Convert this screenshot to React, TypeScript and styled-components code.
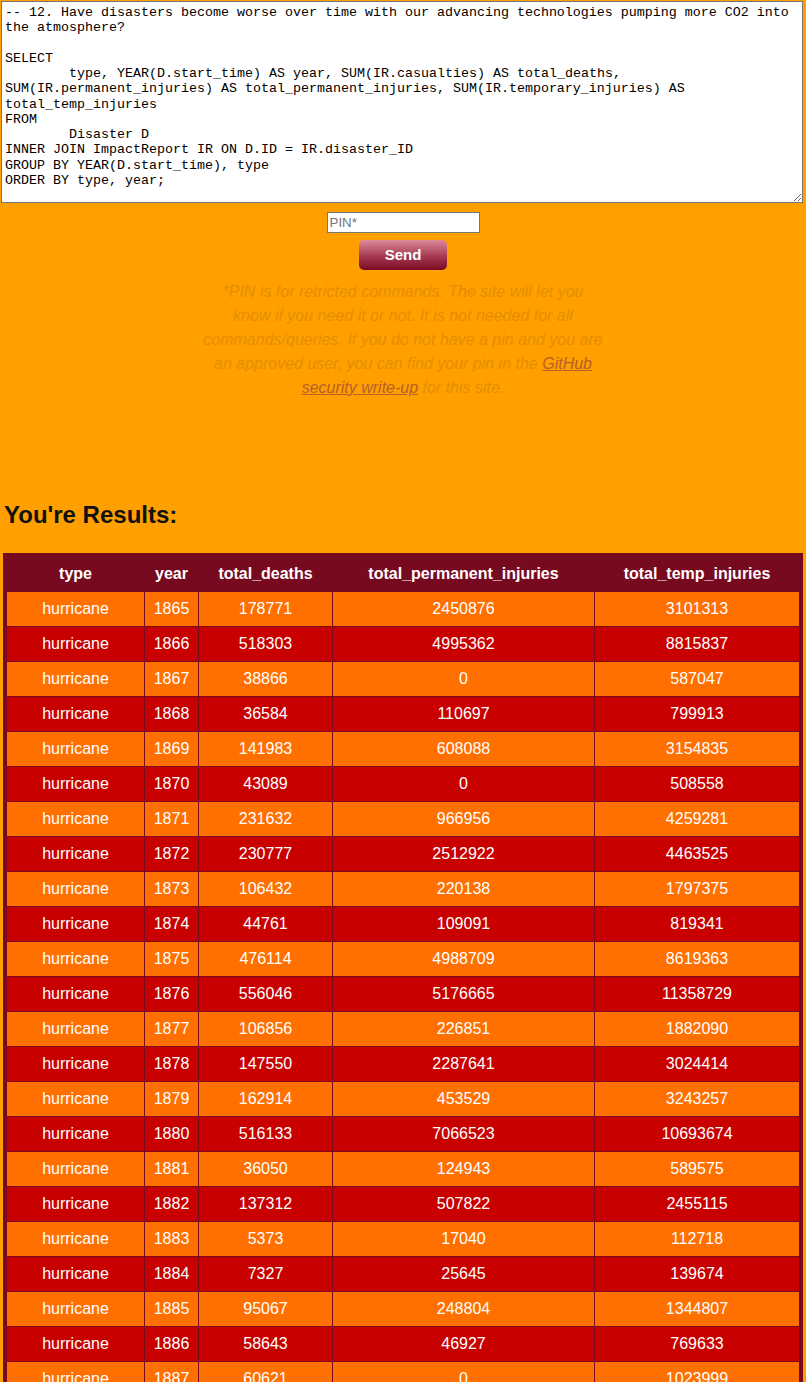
import React from 'react';
import styled, { createGlobalStyle } from 'styled-components';

const GlobalStyle = createGlobalStyle`
   html, body {
      margin: 0;
      padding: 0;
      overflow: hidden;
      background-color: #ff9f00;
      font-family: 'Liberation Sans', Arial, sans-serif;
   }
`;

const Page = styled.div`
   padding: 1px 1px 0 1px;
   display: flex;
   flex-direction: column;
`;

const QueryBox = styled.textarea`
   display: block;
   width: 802px;
   height: 202px;
   margin: 0;
   padding: 3px 3px 2px 3px;
   box-sizing: border-box;
   border: 1px solid #767676;
   background: #fff;
   color: #000;
   font-family: 'Liberation Mono', 'Courier New', monospace;
   font-size: 13.333px;
   line-height: 15.25px;
   tab-size: 8;
   resize: vertical;
`;

const Form = styled.div`
   display: flex;
   flex-direction: column;
   align-items: center;
`;

const PinInput = styled.input`
   margin-top: 9px;
   width: 153px;
   height: 21px;
   box-sizing: border-box;
   padding: 1px 2px;
   border: 1px solid #767676;
   font-family: 'Liberation Sans', Arial, sans-serif;
   font-size: 13.333px;
   &::placeholder {
      color: #757575;
   }
`;

const SendButton = styled.button`
   margin-top: 7px;
   width: 88px;
   height: 30px;
   padding: 0 0 2px 0;
   border: none;
   border-radius: 5px;
   background: linear-gradient(to bottom, #dc8a99 0%, #a43a52 55%, #7a0a22 100%);
   color: #fff;
   font-family: 'Liberation Sans', Arial, sans-serif;
   font-size: 15px;
   font-weight: bold;
   cursor: pointer;
`;

const Note = styled.p`
   width: 400px;
   margin: 10px 0 0 0;
   text-align: center;
   font-style: italic;
   font-size: 16px;
   line-height: 24px;
   color: #e58e00;

   a {
      color: #b8602a;
      text-decoration: underline;
   }
`;

const Heading = styled.h2`
   margin: 101px 0 0 3px;
   font-size: 24px;
   line-height: 28px;
   font-weight: bold;
   color: #111;
`;

const TableWrap = styled.div`
   margin: 24px 2px 0 2px;
`;

const Table = styled.table`
   width: 800px;
   table-layout: fixed;
   border-collapse: separate;
   border-spacing: 1px;
   border: 3px solid #780a20;
   background-color: #780a20;
   color: #fff;
   font-size: 16px;
`;

const HeadCell = styled.th<{ $w: number }>`
   width: ${({ $w }) => $w}px;
   box-sizing: border-box;
   height: 34px;
   padding: 0 4px;
   font-weight: bold;
   text-align: center;
`;

const Row = styled.tr<{ $odd: boolean }>`
   background-color: ${({ $odd }) => ($odd ? '#ff7000' : '#c80000')};
`;

const Cell = styled.td`
   height: 34px;
   padding: 0 4px;
   box-sizing: border-box;
   text-align: center;
`;

const query = `-- 12. Have disasters become worse over time with our advancing technologies pumping more CO2 into the atmosphere?

SELECT
\ttype, YEAR(D.start_time) AS year, SUM(IR.casualties) AS total_deaths, SUM(IR.permanent_injuries) AS total_permanent_injuries, SUM(IR.temporary_injuries) AS total_temp_injuries
FROM
\tDisaster D
INNER JOIN ImpactReport IR ON D.ID = IR.disaster_ID
GROUP BY YEAR(D.start_time), type
ORDER BY type, year;`;

const columns: [string, number][] = [
   ['type', 137],
   ['year', 53],
   ['total_deaths', 133],
   ['total_permanent_injuries', 261],
   ['total_temp_injuries', 204],
];

const rows: [number, number, number, number][] = [
   [1865, 178771, 2450876, 3101313],
   [1866, 518303, 4995362, 8815837],
   [1867, 38866, 0, 587047],
   [1868, 36584, 110697, 799913],
   [1869, 141983, 608088, 3154835],
   [1870, 43089, 0, 508558],
   [1871, 231632, 966956, 4259281],
   [1872, 230777, 2512922, 4463525],
   [1873, 106432, 220138, 1797375],
   [1874, 44761, 109091, 819341],
   [1875, 476114, 4988709, 8619363],
   [1876, 556046, 5176665, 11358729],
   [1877, 106856, 226851, 1882090],
   [1878, 147550, 2287641, 3024414],
   [1879, 162914, 453529, 3243257],
   [1880, 516133, 7066523, 10693674],
   [1881, 36050, 124943, 589575],
   [1882, 137312, 507822, 2455115],
   [1883, 5373, 17040, 112718],
   [1884, 7327, 25645, 139674],
   [1885, 95067, 248804, 1344807],
   [1886, 58643, 46927, 769633],
   [1887, 60621, 0, 1023999],
];

const App: React.FC = () => {
   return (
      <Page>
         <GlobalStyle />
         <QueryBox defaultValue={query} spellCheck={false} />
         <Form>
            <PinInput type='password' placeholder='PIN*' />
            <SendButton>Send</SendButton>
            <Note>
               *PIN is for retricted commands. The site will let you know if you need it or not. It is not
               needed for all commands/queries. If you do not have a pin and you are an approved user, you
               can find your pin in the <a href='#'>GitHub security write-up</a> for this site.
            </Note>
         </Form>
         <Heading>You're Results:</Heading>
         <TableWrap>
            <Table>
               <thead>
                  <tr>
                     {columns.map(([name, w]) => (
                        <HeadCell key={name} $w={w}>
                           {name}
                        </HeadCell>
                     ))}
                  </tr>
               </thead>
               <tbody>
                  {rows.map((r, i) => (
                     <Row key={r[0]} $odd={i % 2 === 0}>
                        <Cell>hurricane</Cell>
                        {r.map((v, j) => (
                           <Cell key={j}>{v}</Cell>
                        ))}
                     </Row>
                  ))}
               </tbody>
            </Table>
         </TableWrap>
      </Page>
   );
};

export default App;
